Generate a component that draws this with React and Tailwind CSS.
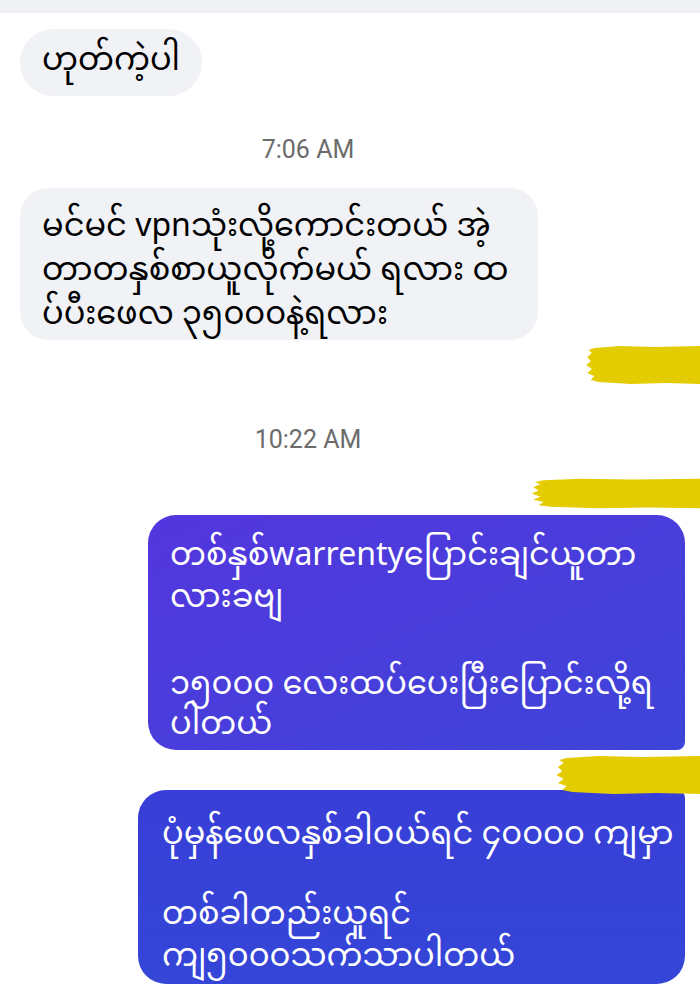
import React from "react";

const mm = { fontFamily: '"Noto Sans Myanmar", "Myanmar Text", Padauk, "Noto Sans", sans-serif' };
const ts = { fontFamily: 'Roboto, "Liberation Sans", sans-serif' };

function Smudge({ className }) {
  return (
    <div className={"absolute " + className}>
      <svg width="100%" height="100%" viewBox="0 0 100 40" preserveAspectRatio="none">
        <path
          d="M8 3 L30 1 L60 2 L100 1 L100 39 L70 38 L40 39 L12 37 L5 35 L8 31 L2 28 L6 24 L1 20 L5 16 L2 12 L6 8 L3 5 Z"
          fill="#e4cc03"
        />
      </svg>
    </div>
  );
}

function Line({ children, h = "h-[42px] leading-[42px]" }) {
  return <div className={"whitespace-nowrap " + h}>{children}</div>;
}

export default function App() {
  return (
    <div className="relative h-[994px] w-[700px] overflow-hidden bg-white text-[32px]" style={mm}>
      <div className="h-[13px] bg-[#eef0f4]" />
      <div className="px-[20px] pt-[16px]">
        <div className="inline-flex h-[67px] items-center rounded-[34px] bg-[#f1f2f6] px-[22px] text-black">
          <span className="leading-[42px]">ဟုတ်ကဲ့ပါ</span>
        </div>
      </div>
      <div className="mt-[39px] pr-[84px] text-center text-[25px] leading-[30px] text-[#6b6b6b]" style={ts}>
        7:06 AM
      </div>
      <div className="mt-[23px] px-[20px]">
        <div className="w-[518px] rounded-[28px] bg-[#f1f2f6] pl-[22px] pt-[19px] text-black">
          <Line h="h-[44px] leading-[44px]">မင်မင် vpnသုံးလို့ကောင်းတယ် အဲ့</Line>
          <Line h="h-[44px] leading-[44px]">တာတနှစ်စာယူလိုက်မယ် ရလား ထ</Line>
          <Line h="h-[44px] leading-[44px]">ပ်ပီးဖေလ ၃၅၀၀၀နဲ့ရလား</Line>
          <div className="h-[1px]" />
        </div>
      </div>
      <div className="mt-[85px] pr-[84px] text-center text-[25px] leading-[30px] text-[#6b6b6b]" style={ts}>
        10:22 AM
      </div>
      <div className="mt-[60px] flex justify-end pr-[15px]">
        <div className="w-[537px] rounded-[28px] rounded-br-[8px] bg-gradient-to-br from-[#5336de] to-[#3d44d8] pb-[4px] pl-[22px] pt-[22px] text-white">
          <Line>တစ်နှစ်warrentyပြောင်းချင်ယူတာ</Line>
          <Line>လားခဗျ</Line>
          <div className="h-[45px]" />
          <Line>၁၅၀၀၀ လေးထပ်ပေးပြီးပြောင်းလို့ရ</Line>
          <Line h="h-[38px] leading-[38px]">ပါတယ်</Line>
        </div>
      </div>
      <div className="mt-[40px] flex justify-end pr-[15px]">
        <div className="w-[547px] rounded-[28px] rounded-tr-[8px] bg-gradient-to-b from-[#383ed7] to-[#3446d7] pb-[4px] pl-[24px] pt-[26px] text-white">
          <Line>ပုံမှန်ဖေလနှစ်ခါဝယ်ရင် ၄၀၀၀၀ ကျမှာ</Line>
          <div className="h-[38px]" />
          <Line>တစ်ခါတည်းယူရင်</Line>
          <Line>ကျ၅၀၀၀သက်သာပါတယ်</Line>
        </div>
      </div>
      <Smudge className="left-[585px] top-[345px] h-[40px] w-[115px]" />
      <Smudge className="left-[530px] top-[478px] h-[31px] w-[170px]" />
      <Smudge className="left-[555px] top-[755px] h-[40px] w-[145px]" />
    </div>
  );
}
